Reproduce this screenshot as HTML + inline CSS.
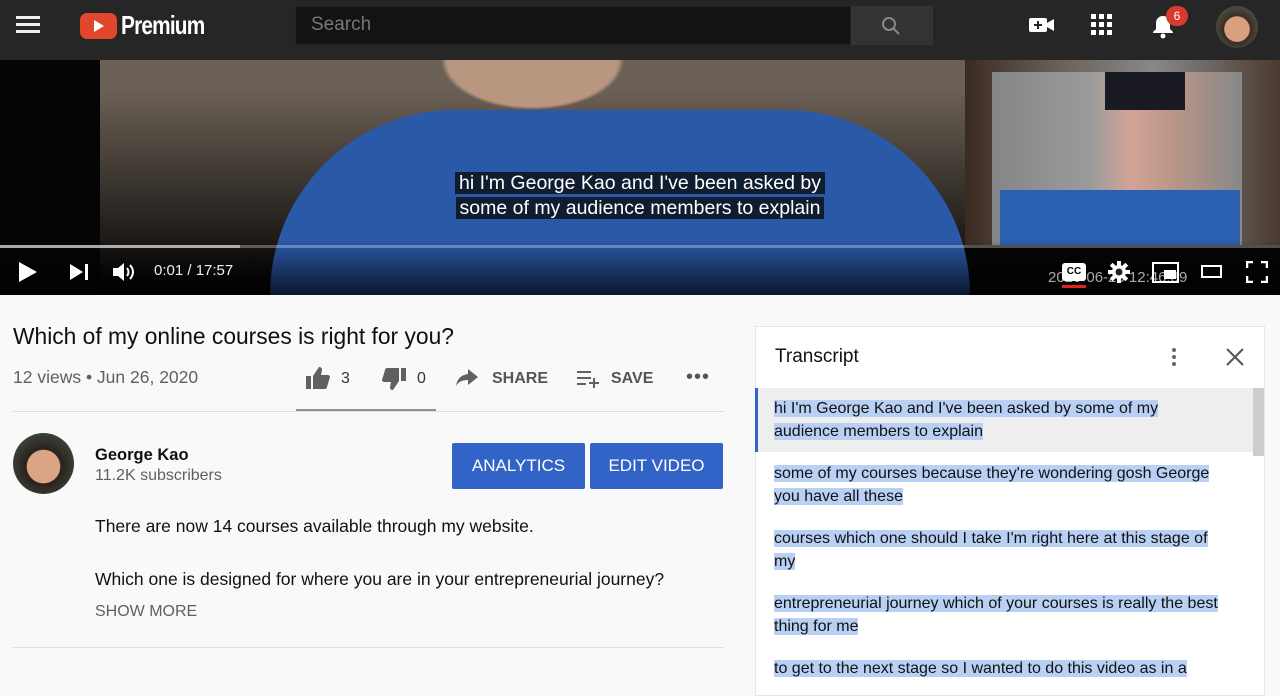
<!DOCTYPE html>
<html><head><style>
*{box-sizing:border-box;margin:0;padding:0}
body{width:1280px;height:684px;overflow:hidden;background:#f9f9f9;font-family:"Liberation Sans",sans-serif;position:relative}
.a{position:absolute}
.hl{background:#b9d0f5}
.tr{font-size:16px;color:#111;line-height:23px}
</style></head><body>
<div class="a" style="left:0;top:0;width:1280px;height:60px;background:#262626"></div>
<div class="a" style="left:16px;top:16px;width:24px;height:3px;background:#eee;box-shadow:0 7px 0 #eee,0 14px 0 #eee"></div>
<div class="a" style="left:80px;top:13px;width:37px;height:26px;background:#e0472d;border-radius:7px"></div>
<div class="a" style="left:94px;top:20px;width:0;height:0;border-left:10px solid #fff;border-top:6px solid transparent;border-bottom:6px solid transparent"></div>
<div class="a" style="left:121px;top:10px;color:#fff;font-size:26px;font-weight:bold;letter-spacing:-1px;transform:scaleX(.8);transform-origin:left">Premium</div>
<div class="a" style="left:295px;top:6px;width:556px;height:39px;background:#131313;border:1px solid #222"></div>
<div class="a" style="left:311px;top:14px;color:#777;font-size:19px">Search</div>
<div class="a" style="left:851px;top:6px;width:82px;height:39px;background:#333"></div>
<svg class="a" style="left:880px;top:15px" width="22" height="22" viewBox="0 0 22 22"><circle cx="9" cy="9" r="6" fill="none" stroke="#888" stroke-width="2"/><path d="M13 13l6 6" stroke="#888" stroke-width="2"/></svg>
<svg class="a" style="left:1029px;top:15px" width="26" height="20" viewBox="0 0 26 20"><rect x="0" y="3" width="18" height="14" rx="2" fill="#fff"/><path d="M18 8l7-4v12l-7-4z" fill="#fff"/><path d="M9 6v8M5 10h8" stroke="#262626" stroke-width="2"/></svg>
<svg class="a" style="left:1091px;top:14px" width="22" height="22"><g fill="#fff"><rect x="0" y="0" width="5" height="5"/><rect x="8" y="0" width="5" height="5"/><rect x="16" y="0" width="5" height="5"/><rect x="0" y="8" width="5" height="5"/><rect x="8" y="8" width="5" height="5"/><rect x="16" y="8" width="5" height="5"/><rect x="0" y="16" width="5" height="5"/><rect x="8" y="16" width="5" height="5"/><rect x="16" y="16" width="5" height="5"/></g></svg>
<svg class="a" style="left:1151px;top:14px" width="24" height="26" viewBox="0 0 24 26"><path d="M12 2c-4 0-7 3-7 7v6l-3 3v1h20v-1l-3-3V9c0-4-3-7-7-7z" fill="#fff"/><circle cx="12" cy="22" r="2.5" fill="#fff"/></svg>
<div class="a" style="left:1166px;top:6px;width:22px;height:20px;border-radius:10px;background:#d93a2b;color:#fff;font-size:12px;text-align:center;line-height:20px">6</div>
<div class="a" style="left:1216px;top:6px;width:42px;height:42px;border-radius:50%;background:radial-gradient(circle at 50% 55%,#d9a080 0 40%,#3a2c24 42%,#5a6a60 100%)"></div>
<!-- video -->
<div class="a" style="left:0;top:60px;width:1280px;height:235px;background:#050505"></div>
<div class="a" style="left:100px;top:60px;width:865px;height:235px;background:radial-gradient(ellipse at 50% 0%,#b89680 0 14%,transparent 15%),linear-gradient(180deg,transparent 0,transparent 30px,#000 100%),radial-gradient(ellipse at 60% 90%,#2456a8 0 45%,transparent 46%),#6b6055"></div>
<div class="a" style="left:270px;top:110px;width:700px;height:185px;background:#2a59a8;border-radius:300px 300px 0 0"></div>
<div class="a" style="left:965px;top:60px;width:315px;height:185px;background:linear-gradient(90deg,#3a2a22,#6b6158 30%,#888 60%,#4a3a30)"></div>
<div class="a" style="left:992px;top:72px;width:250px;height:173px;background:linear-gradient(90deg,#8a8d90,#a0a0a0 40%,#d9a89a 55%,#c59a88 70%,#8a8d90);opacity:.9"></div>
<div class="a" style="left:1000px;top:190px;width:240px;height:55px;background:#2b5fb0"></div>
<div class="a" style="left:1105px;top:72px;width:80px;height:38px;background:#1a1a22"></div>
<div class="a" style="left:0;top:240px;width:1280px;height:55px;background:linear-gradient(transparent,rgba(0,0,0,.75))"></div>
<div class="a" style="left:430px;top:171px;width:420px;height:50px;text-align:center;font-size:19.5px;line-height:25px;color:#fff"><span style="background:rgba(8,8,8,.75);padding:0 4px">hi I'm George Kao and I've been asked by</span><br><span style="background:rgba(8,8,8,.75);padding:0 4px">some of my audience members to explain</span></div>
<div class="a" style="left:0;top:245px;width:1280px;height:3px;background:rgba(255,255,255,.3)"></div>
<div class="a" style="left:0;top:245px;width:240px;height:3px;background:rgba(255,255,255,.5)"></div>
<div class="a" style="left:19px;top:262px;width:0;height:0;border-left:18px solid #fff;border-top:10px solid transparent;border-bottom:10px solid transparent"></div>
<div class="a" style="left:70px;top:264px;width:0;height:0;border-left:13px solid #fff;border-top:8px solid transparent;border-bottom:8px solid transparent"></div>
<div class="a" style="left:85px;top:264px;width:3px;height:16px;background:#fff"></div>
<svg class="a" style="left:111px;top:260px" width="26" height="24" viewBox="0 0 26 24"><path d="M2 8h5l6-5v18l-6-5H2z" fill="#fff"/><path d="M16 8q3 4 0 8M19 5q6 7 0 14" stroke="#fff" stroke-width="2" fill="none"/></svg>
<div class="a" style="left:154px;top:262px;color:#eee;font-size:15px">0:01 / 17:57</div>
<div class="a" style="left:1048px;top:269px;color:#aaa;font-size:15px">2020-06-26 12:46:39</div>
<div class="a" style="left:1062px;top:263px;width:24px;height:18px;background:#fff;border-radius:3px;color:#000;font-size:10px;font-weight:bold;text-align:center;line-height:18px">CC</div>
<div class="a" style="left:1062px;top:285px;width:24px;height:3px;background:#e62117"></div>
<svg class="a" style="left:1108px;top:261px" width="22" height="22" viewBox="0 0 22 22"><g fill="#fff"><circle cx="11" cy="11" r="7"/><rect x="9" y="0" width="4" height="22"/><rect x="0" y="9" width="22" height="4"/><rect x="9" y="0" width="4" height="22" transform="rotate(45 11 11)"/><rect x="9" y="0" width="4" height="22" transform="rotate(-45 11 11)"/></g><circle cx="11" cy="11" r="3.5" fill="#222"/></svg>
<div class="a" style="left:1152px;top:262px;width:27px;height:21px;border:2px solid #fff"></div>
<div class="a" style="left:1164px;top:270px;width:12px;height:9px;background:#fff"></div>
<div class="a" style="left:1201px;top:265px;width:21px;height:13px;border:2px solid #fff"></div>
<svg class="a" style="left:1246px;top:261px" width="22" height="22"><path d="M1 7V1h6M15 1h6v6M21 15v6h-6M7 21H1v-6" stroke="#fff" stroke-width="2.5" fill="none"/></svg>
<!-- left content -->
<div class="a" style="left:13px;top:323px;font-size:22.8px;color:#0f0f0f">Which of my online courses is right for you?</div>
<div class="a" style="left:13px;top:367px;font-size:17.5px;color:#606060">12 views • Jun 26, 2020</div>
<svg class="a" style="left:306px;top:367px" width="24" height="22" viewBox="0 0 24 22"><path d="M0 9h5v13H0zM7 9l6-9c2 0 3 1 3 3l-1 5h7c1 0 2 1 2 2l-3 10c0 1-1 2-2 2H7z" fill="#606060"/></svg>
<div class="a" style="left:341px;top:370px;font-size:16px;color:#333">3</div>
<svg class="a" style="left:382px;top:368px" width="24" height="22" viewBox="0 0 24 22"><g transform="rotate(180 12 11)"><path d="M0 9h5v13H0zM7 9l6-9c2 0 3 1 3 3l-1 5h7c1 0 2 1 2 2l-3 10c0 1-1 2-2 2H7z" fill="#606060"/></g></svg>
<div class="a" style="left:417px;top:370px;font-size:16px;color:#333">0</div>
<svg class="a" style="left:456px;top:369px" width="22" height="18"><path d="M12 0l10 8-10 8v-5C6 11 2 13 0 17 1 10 5 6 12 5z" fill="#606060"/></svg>
<div class="a" style="left:492px;top:370px;font-size:16px;color:#555;font-weight:bold">SHARE</div>
<svg class="a" style="left:577px;top:370px" width="24" height="18"><path d="M0 2h14M0 8h14M0 14h9M12 13h10M17 8v10" stroke="#606060" stroke-width="2"/></svg>
<div class="a" style="left:611px;top:370px;font-size:16px;color:#555;font-weight:bold">SAVE</div>
<div class="a" style="left:686px;top:366px;font-size:20px;color:#555;letter-spacing:1px">•••</div>
<div class="a" style="left:296px;top:409px;width:140px;height:2px;background:#909090"></div>
<div class="a" style="left:13px;top:411px;width:711px;height:1px;background:#ddd"></div>
<div class="a" style="left:13px;top:433px;width:61px;height:61px;border-radius:50%;background:radial-gradient(circle at 50% 55%,#dba585 0 36%,#2a211b 38%,#4a5a54 100%)"></div>
<div class="a" style="left:95px;top:446px;font-size:16.5px;font-weight:bold;color:#111">George Kao</div>
<div class="a" style="left:95px;top:467px;font-size:16px;color:#606060">11.2K subscribers</div>
<div class="a" style="left:452px;top:443px;width:133px;height:46px;background:#3264c8;border-radius:2px;color:#fff;font-size:17px;text-align:center;line-height:46px">ANALYTICS</div>
<div class="a" style="left:590px;top:443px;width:133px;height:46px;background:#3264c8;border-radius:2px;color:#fff;font-size:17px;text-align:center;line-height:46px">EDIT VIDEO</div>
<div class="a" style="left:95px;top:516px;font-size:17.5px;color:#111">There are now 14 courses available through my website.</div>
<div class="a" style="left:95px;top:569px;font-size:17.5px;color:#111">Which one is designed for where you are in your entrepreneurial journey?</div>
<div class="a" style="left:95px;top:603px;font-size:16px;color:#606060">SHOW MORE</div>
<div class="a" style="left:13px;top:647px;width:711px;height:1px;background:#ddd"></div>
<!-- transcript -->
<div class="a" style="left:755px;top:326px;width:510px;height:370px;background:#fff;border:1px solid #e5e5e5"></div>
<div class="a" style="left:775px;top:346px;font-size:19px;color:#111">Transcript</div>
<div class="a" style="left:1172px;top:348px;width:4px;height:4px;background:#666;border-radius:50%;box-shadow:0 7px 0 #666,0 14px 0 #666"></div>
<svg class="a" style="left:1226px;top:348px" width="18" height="18"><path d="M1 1l16 16M17 1L1 17" stroke="#555" stroke-width="2"/></svg>
<div class="a" style="left:756px;top:388px;width:497px;height:64px;background:#eee"></div>
<div class="a" style="left:755px;top:388px;width:3px;height:64px;background:#3264c8"></div>
<div class="a" style="left:1253px;top:388px;width:11px;height:68px;background:#ccc"></div>
<div class="a tr" style="left:774px;top:397px;width:445px"><span class="hl">hi I'm George Kao and I've been asked by some of my audience members to explain</span></div>
<div class="a tr" style="left:774px;top:462px;width:445px"><span class="hl">some of my courses because they're wondering gosh George you have all these</span></div>
<div class="a tr" style="left:774px;top:527px;width:445px"><span class="hl">courses which one should I take I'm right here at this stage of my</span></div>
<div class="a tr" style="left:774px;top:592px;width:445px"><span class="hl">entrepreneurial journey which of your courses is really the best thing for me</span></div>
<div class="a tr" style="left:774px;top:657px;width:445px"><span class="hl">to get to the next stage so I wanted to do this video as in a</span></div>
</body></html>
